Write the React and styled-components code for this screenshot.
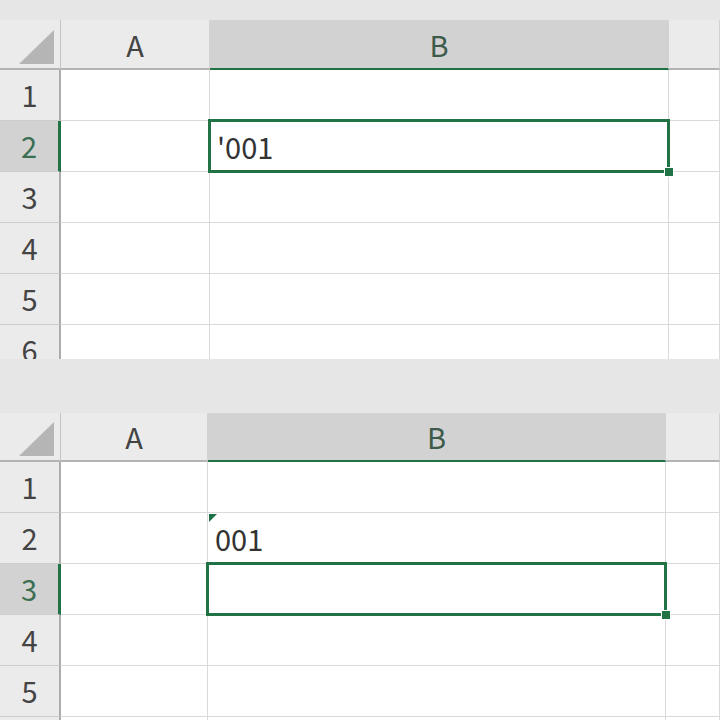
import React from 'react';
import styled, { createGlobalStyle } from 'styled-components';

const GREEN = '#217346';

const Global = createGlobalStyle`
  html, body { margin: 0; padding: 0; background: #e6e6e6; }
  body {
    width: 720px; height: 720px; overflow: hidden;
    font-family: "Noto Sans CJK JP", "Noto Sans", sans-serif;
  }
`;

const Page = styled.div`
  width: 720px;
  height: 720px;
  display: flex;
  flex-direction: column;
  overflow: hidden;
  background: #e6e6e6;
`;

const Panel = styled.section`
  flex: none;
  box-sizing: border-box;
  height: ${p => p.$height}px;
  padding-top: ${p => p.$gap}px;
  overflow: hidden;
`;

const Grid = styled.div`
  display: grid;
  grid-template-columns: 61px ${p => p.$a}px ${p => p.$b}px 1fr;
  grid-template-rows: ${p => p.$head}px;
  grid-auto-rows: 51px;
`;

const HeaderCell = styled.div`
  box-sizing: border-box;
  display: flex;
  align-items: center;
  justify-content: center;
  background: ${p => (p.$selected ? '#d2d2d2' : '#ebebeb')};
  border-right: 1px solid #d2d2d2;
  border-bottom: 2px solid ${p => (p.$selected ? GREEN : '#b4b4b4')};
  font-size: 29px;
  line-height: 1;
  color: ${p => (p.$selected ? '#3d5a4b' : '#444')};
`;

const Corner = styled(HeaderCell)`
  align-items: flex-end;
  justify-content: flex-end;
  padding: 0 6px 4px 0;
  border-right: 1px solid #c6c6c6;
`;

const Triangle = styled.span`
  width: 35px;
  height: 34px;
  background: #b5b5b5;
  clip-path: polygon(100% 0, 100% 100%, 0 100%);
`;

const RowHeader = styled.div`
  box-sizing: border-box;
  display: flex;
  align-items: center;
  justify-content: center;
  background: ${p => (p.$selected ? '#d2d2d2' : '#ebebeb')};
  border-right: ${p => (p.$selected ? `3px solid ${GREEN}` : '2px solid #acacac')};
  border-bottom: 1px solid #cdcdcd;
  font-size: 29px;
  line-height: 1;
  padding-bottom: 2px;
  color: ${p => (p.$selected ? '#3a6f52' : '#444')};
`;

const Cell = styled.div`
  position: relative;
  box-sizing: border-box;
  display: flex;
  align-items: center;
  padding: 0 0 0 7px;
  background: #fff;
  border-right: 1px solid #dadada;
  border-bottom: 1px solid #dadada;
  font-size: 29px;
  line-height: 1;
  color: #333;
`;

const Selection = styled.span`
  position: absolute;
  top: -2px;
  left: -2px;
  right: -2px;
  bottom: -2px;
  border: 3px solid ${GREEN};
  pointer-events: none;
  z-index: 2;
`;

const Handle = styled.span`
  position: absolute;
  right: -7px;
  bottom: -7px;
  width: 8px;
  height: 8px;
  background: ${GREEN};
  border: 1px solid #fff;
`;

const ErrorMark = styled.span`
  position: absolute;
  top: 1px;
  left: 1px;
  width: 8px;
  height: 8px;
  background: #1e7145;
  clip-path: polygon(0 0, 100% 0, 0 100%);
`;

const COLS = ['A', 'B', 'C'];

function Sheet({ height, gap, head, a, b, selRow, cells }) {
  return (
    <Panel $height={height} $gap={gap}>
      <Grid $a={a} $b={b} $head={head}>
        <Corner>
          <Triangle />
        </Corner>
        {COLS.map(c => (
          <HeaderCell key={c} $selected={c === 'B'}>
            {c === 'C' ? '' : c}
          </HeaderCell>
        ))}
        {[1, 2, 3, 4, 5, 6].map(r => (
          <React.Fragment key={r}>
            <RowHeader $selected={r === selRow}>{r}</RowHeader>
            {COLS.map(c => {
              const info = cells[`${c}${r}`] || {};
              return (
                <Cell key={c}>
                  {info.mark && <ErrorMark />}
                  {info.text}
                  {c === 'B' && r === selRow && (
                    <Selection>
                      <Handle />
                    </Selection>
                  )}
                </Cell>
              );
            })}
          </React.Fragment>
        ))}
      </Grid>
    </Panel>
  );
}

export default function App() {
  return (
    <>
      <Global />
      <Page>
        <Sheet
          height={359}
          gap={20}
          head={50}
          a={149}
          b={459}
          selRow={2}
          cells={{ B2: { text: "'001" } }}
        />
        <Sheet
          height={361}
          gap={54}
          head={49}
          a={147}
          b={458}
          selRow={3}
          cells={{ B2: { text: '001', mark: true } }}
        />
      </Page>
    </>
  );
}
